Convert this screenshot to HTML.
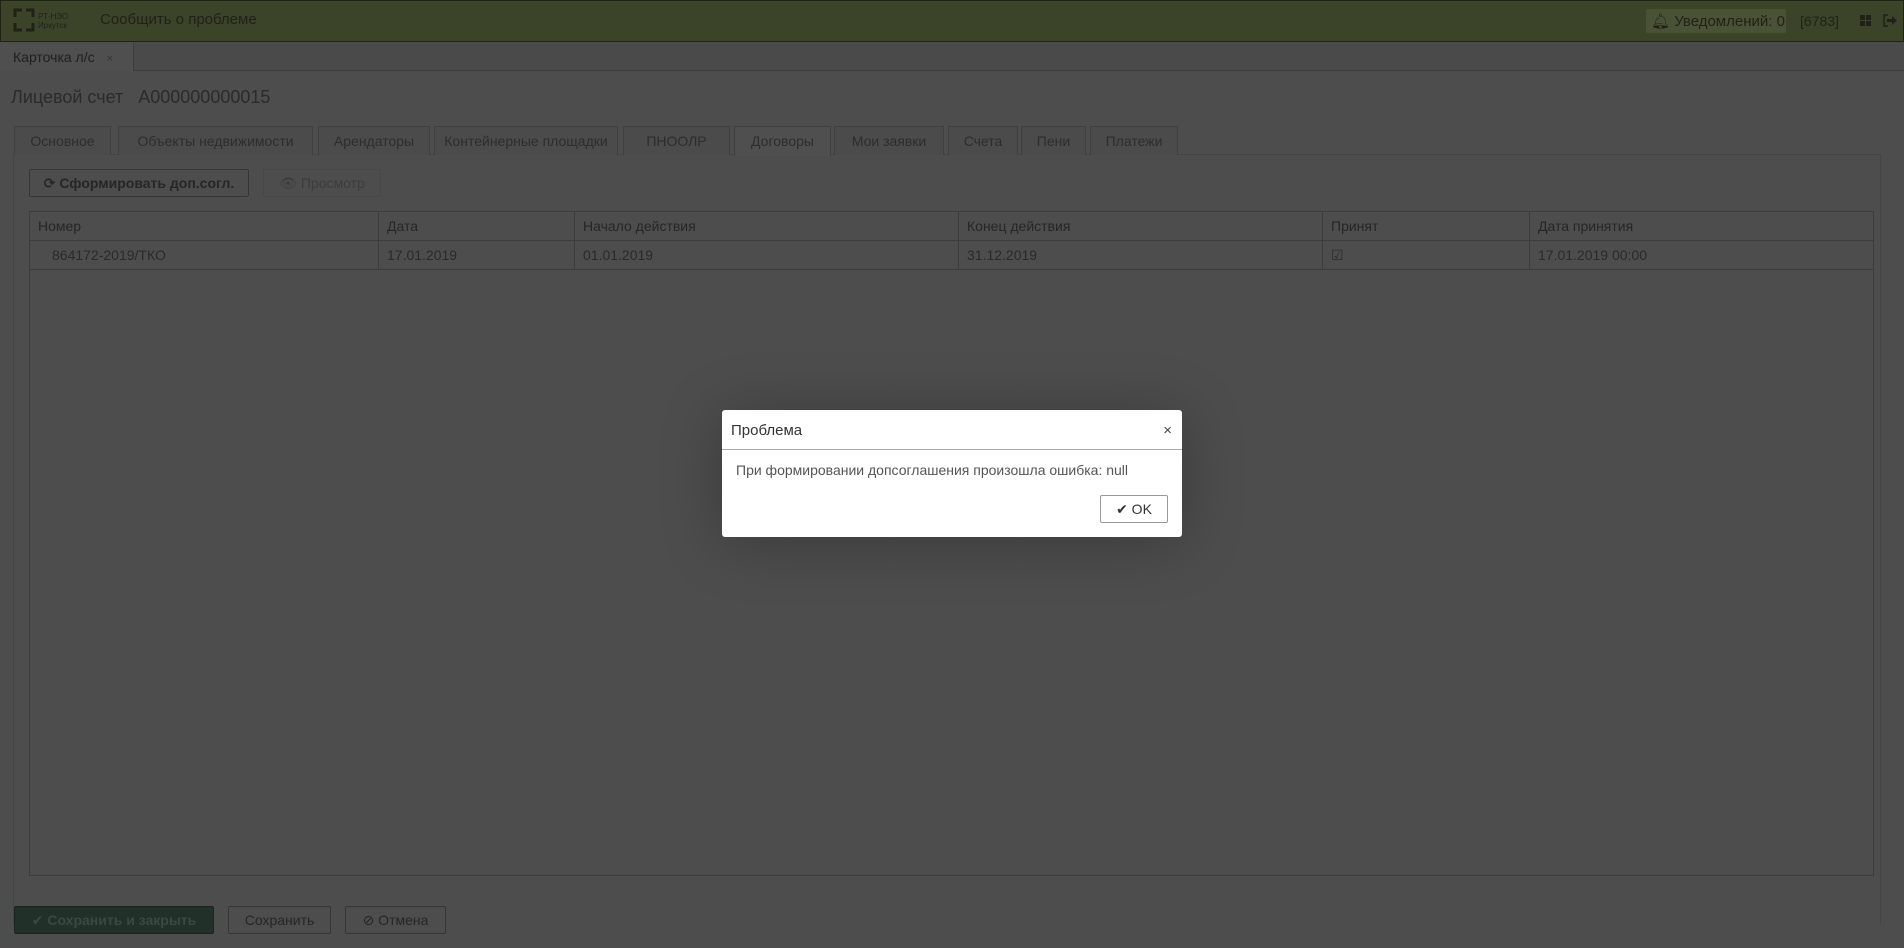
<!DOCTYPE html>
<html><head><meta charset="utf-8"><style>
*{box-sizing:border-box;margin:0;padding:0}
body{width:1904px;height:948px;background:#4d4d4d;font-family:"Liberation Sans","DejaVu Sans",sans-serif;font-size:14px;color:#262626;position:relative;overflow:hidden}
.abs{position:absolute}
.hdr{left:0;top:0;width:1904px;height:42px;background:#3b4429;border:1px solid #1f2318}
.tabbar{top:42px;left:0;width:1904px;height:29px;border-bottom:1px solid #3e3e3e;background:#4a4a4a}
.tab1{left:0;top:42px;width:134px;height:29px;background:#4f4f4f;border-right:1px solid #3e3e3e;font-size:14px;padding:7px 0 0 13px;color:#1f1f1f;white-space:nowrap}
.tabs div{position:absolute;top:126px;height:29px;border:1px solid #3f3f3f;border-bottom:none;background:#4b4b4b;color:#2d2d2d;font-size:14px;text-align:center;line-height:28px}
.btn{border:1px solid #363636;border-radius:2px;font-size:14px;text-align:center;white-space:nowrap}
table{border-collapse:collapse;position:absolute;left:29px;top:211px;width:1845px;font-size:14px}
td{border:1px solid #3c3c3c;height:29px;padding:0 8px;color:#2a2a2a}
th{border:1px solid #3c3c3c;height:29px;padding:0 8px;text-align:left;font-weight:normal;color:#262626}
</style></head><body>
<div class="abs hdr"></div>
<svg class="abs" style="left:13px;top:8px" width="22" height="24" viewBox="0 0 22 24"><path d="M2 9V2h7M13 2h7v7M20 15v7h-7M9 22H2v-7" fill="none" stroke="#1e2218" stroke-width="3"/></svg>
<div class="abs" style="left:38px;top:12px;font-size:8px;line-height:9px;color:#1e2218">РТ-НЭО<br>Иркутск</div>
<div class="abs" style="left:100px;top:11px;font-size:15px;color:#1e2218">Сообщить о проблеме</div>
<div class="abs" style="left:1646px;top:9px;width:140px;height:24px;background:#4a5236;border-radius:2px"></div>
<div class="abs" style="left:1651px;top:12px;font-size:15px;color:#1e2218">🔔︎ Уведомлений: 0</div>
<div class="abs" style="left:1800px;top:13px;font-size:14px;color:#1e2218">[6783]</div>
<svg class="abs" style="left:1860px;top:15px" width="12" height="12"><rect x="0" y="0" width="5" height="5" fill="#1e2218"/><rect x="6" y="0" width="5" height="5" fill="#1e2218"/><rect x="0" y="6" width="5" height="5" fill="#1e2218"/><rect x="6" y="6" width="5" height="5" fill="#1e2218"/></svg>
<svg class="abs" style="left:1883px;top:14px" width="14" height="13"><path d="M5 1H1v11h4" fill="none" stroke="#1e2218" stroke-width="1.5"/><path d="M4 5h5V2l5 4.5-5 4.5V8H4z" fill="#1e2218"/></svg>
<div class="abs tabbar"></div>
<div class="abs tab1">Карточка л/с <span style="font-size:11px;color:#333;margin-left:8px">×</span></div>
<div class="abs" style="left:11px;top:87px;font-size:18px;color:#2b2b2b">Лицевой счет&nbsp;&nbsp; А000000000015</div>
<div class="abs" style="left:13px;top:154px;width:1868px;height:770px;border:1px solid #444;border-bottom:none"></div>
<div class="tabs">
<div style="left:14px;width:97px">Основное</div>
<div style="left:118px;width:195px">Объекты недвижимости</div>
<div style="left:318px;width:112px">Арендаторы</div>
<div style="left:434px;width:184px">Контейнерные площадки</div>
<div style="left:623px;width:107px">ПНООЛР</div>
<div style="left:734px;width:97px;background:#4f4f4f;height:30px">Договоры</div>
<div style="left:834px;width:110px">Мои заявки</div>
<div style="left:948px;width:70px">Счета</div>
<div style="left:1021px;width:65px">Пени</div>
<div style="left:1090px;width:88px">Платежи</div>
</div>
<div class="abs btn" style="left:29px;top:169px;width:220px;height:28px;line-height:26px;font-weight:bold;color:#262626">⟳ Сформировать доп.согл.</div>
<div class="abs btn" style="left:263px;top:169px;width:118px;height:28px;line-height:26px;color:#3c3c3c;border-color:#474747">👁︎ Просмотр</div>
<table>
<tr><th style="width:349px">Номер</th><th style="width:196px">Дата</th><th style="width:384px">Начало действия</th><th style="width:364px">Конец действия</th><th style="width:207px">Принят</th><th>Дата принятия</th></tr>
<tr><td style="padding-left:22px">864172-2019/ТКО</td><td>17.01.2019</td><td>01.01.2019</td><td>31.12.2019</td><td>☑</td><td>17.01.2019 00:00</td></tr>
</table>
<div class="abs" style="left:29px;top:268px;width:1845px;height:608px;border:1px solid #3c3c3c;border-top:none"></div>
<div class="abs btn" style="left:14px;top:906px;width:200px;height:28px;line-height:26px;background:#213029;border-color:#1a2520;color:#3a4a42;font-weight:bold">✔ Сохранить и закрыть</div>
<div class="abs btn" style="left:228px;top:906px;width:103px;height:28px;line-height:26px">Сохранить</div>
<div class="abs btn" style="left:345px;top:906px;width:101px;height:28px;line-height:26px">⊘ Отмена</div>
<div class="abs" style="left:722px;top:410px;width:460px;height:127px;background:#fff;border-radius:3px;box-shadow:0 5px 60px rgba(0,0,0,.25)">
<div style="height:40px;border-bottom:1px solid #aaa;padding:12px 0 0 9px;font-size:15px;color:#333">Проблема<span style="position:absolute;right:10px;top:12px;font-size:15px;color:#444">×</span></div>
<div style="padding:12px 0 0 14px;font-size:14px;color:#555">При формировании допсоглашения произошла ошибка: null</div>
<div style="position:absolute;left:378px;top:85px;width:68px;height:28px;border:1px solid #999;border-radius:2px;text-align:center;line-height:26px;font-size:14px;color:#333">✔ OK</div>
</div>
</body></html>
